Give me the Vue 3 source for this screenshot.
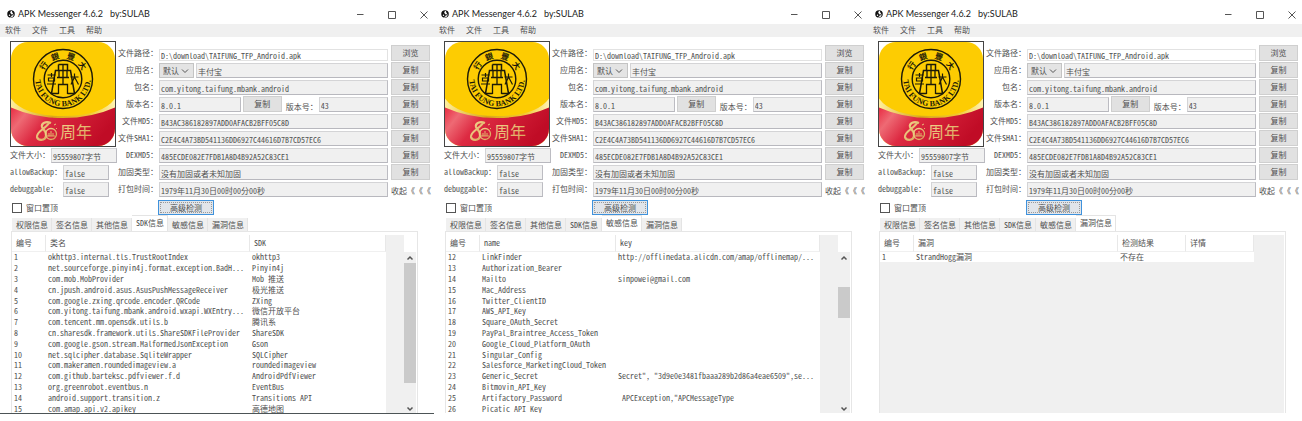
<script setup>
import { ref } from 'vue'

const menus = ['软件', '文件', '工具', '帮助']
const tabs = ['权限信息', '签名信息', '其他信息', 'SDK信息', '敏感信息', '漏洞信息']

const fields = [
  { id: 'md5', label: '文件MD5：', value: 'B43AC386182897ADD0AFACB2BFF05C8D' },
  { id: 'sha', label: '文件SHA1：', value: 'C2E4C4A73BD541136DD6927C44616D7B7CD57EC6' },
  { id: 'dex', label: 'DEXMD5：', value: '485ECDE082E7FDB1A8D4B92A52C83CE1' },
  { id: 'pack', label: '加固类型：', value: '没有加固或者未知加固' }
]

const windows = ref([
  {
    id: 'sdk',
    active: 3,
    cols: ['编号', '类名', 'SDK'],
    scroll: true,
    rows: [
      ['1', 'okhttp3.internal.tls.TrustRootIndex', 'okhttp3'],
      ['2', 'net.sourceforge.pinyin4j.format.exception.BadH...', 'Pinyin4j'],
      ['3', 'com.mob.MobProvider', 'Mob 推送'],
      ['4', 'cn.jpush.android.asus.AsusPushMessageReceiver', '极光推送'],
      ['5', 'com.google.zxing.qrcode.encoder.QRCode', 'ZXing'],
      ['6', 'com.yitong.taifung.mbank.android.wxapi.WXEntry...', '微信开放平台'],
      ['7', 'com.tencent.mm.opensdk.utils.b', '腾讯系'],
      ['8', 'cn.sharesdk.framework.utils.ShareSDKFileProvider', 'ShareSDK'],
      ['9', 'com.google.gson.stream.MalformedJsonException', 'Gson'],
      ['10', 'net.sqlcipher.database.SqliteWrapper', 'SQLCipher'],
      ['11', 'com.makeramen.roundedimageview.a', 'roundedimageview'],
      ['12', 'com.github.barteksc.pdfviewer.f.d', 'AndroidPdfViewer'],
      ['13', 'org.greenrobot.eventbus.n', 'EventBus'],
      ['14', 'android.support.transition.z', 'Transitions API'],
      ['15', 'com.amap.api.v2.apikey', '高德地图']
    ]
  },
  {
    id: 'leak',
    active: 4,
    cols: ['编号', 'name', 'key'],
    scroll: true,
    rows: [
      ['12', 'LinkFinder', 'http://offlinedata.alicdn.com/amap/offlinemap/...'],
      ['13', 'Authorization_Bearer', ''],
      ['14', 'Mailto', 'sinpowei@gmail.com'],
      ['15', 'Mac_Address', ''],
      ['16', 'Twitter_ClientID', ''],
      ['17', 'AWS_API_Key', ''],
      ['18', 'Square_OAuth_Secret', ''],
      ['19', 'PayPal_Braintree_Access_Token', ''],
      ['20', 'Google_Cloud_Platform_OAuth', ''],
      ['21', 'Singular_Config', ''],
      ['22', 'Salesforce_MarketingCloud_Token', ''],
      ['23', 'Generic_Secret', 'Secret", "3d9e0e3481fbaaa289b2d86a4eae6509",se...'],
      ['24', 'Bitmovin_API_Key', ''],
      ['25', 'Artifactory_Password', ' APCException,"APCMessageType'],
      ['26', 'Picatic API Key', '']
    ]
  },
  {
    id: 'vuln',
    active: 5,
    cols: ['编号', '漏洞', '检测结果', '详情'],
    scroll: false,
    rows: [['1', 'StrandHogg漏洞', '不存在', '']]
  }
])
</script>

<template>
  <main class="desk">
    <section v-for="w in windows" :key="w.id" class="window" :class="w.id">
      <header class="titlebar">
        <svg class="logo" viewBox="0 0 16 16" aria-hidden="true">
          <circle cx="8" cy="8" r="7.5" fill="#111" />
          <path d="M10.500 1.500C6 2.500 5.500 5.500 8 7.500s2.500 6-3 6.800a7.200 7.200 0 0 0 2.500.5c5-1 6.500-4 5-7S9 4 10.500 1.500z" fill="#fff" />
          <circle cx="5" cy="10.500" r="1.500" fill="#fff" />
          <circle cx="10.300" cy="9.500" r="1.400" fill="#111" />
        </svg>
        <h1>APK Messenger 4.6.2</h1>
        <span class="by">by:SULAB</span>
        <div class="controls">
          <button type="button" aria-label="最小化"><svg viewBox="0 0 12 12"><path d="M3 6.500h6.500" /></svg></button>
          <button type="button" aria-label="最大化"><svg viewBox="0 0 12 12"><path d="M2.500 3.500h7v7h-7z" /></svg></button>
          <button type="button" aria-label="关闭"><svg viewBox="0 0 12 12"><path d="M2.500 3.500l7 7M9.500 3.500l-7 7" /></svg></button>
        </div>
      </header>

      <nav class="menubar">
        <button v-for="m in menus" :key="m" type="button">{{ m }}</button>
      </nav>

      <div class="info">
        <div class="left">
          <svg class="appicon" viewBox="0 0 106 106" role="img" aria-label="大豐銀行">
            <defs>
              <linearGradient :id="w.id + 'red'" x1="0" y1="0" x2="1" y2="0.300">
                <stop offset="0" stop-color="#e8283f" />
                <stop offset="0.180" stop-color="#ee6a74" />
                <stop offset="0.400" stop-color="#dd2a42" />
                <stop offset="1" stop-color="#c00c26" />
              </linearGradient>
              <linearGradient :id="w.id + 'rim'" x1="0" y1="0" x2="1" y2="0">
                <stop offset="0" stop-color="#fff0a0" />
                <stop offset="0.400" stop-color="#d8a818" />
                <stop offset="0.750" stop-color="#f0c830" />
                <stop offset="1" stop-color="#fff4b8" />
              </linearGradient>
              <linearGradient :id="w.id + 'gold'" x1="0" y1="0" x2="1" y2="1">
                <stop offset="0" stop-color="#f4d890" />
                <stop offset="1" stop-color="#d8a058" />
              </linearGradient>
              <clipPath :id="w.id + 'clip'"><rect x="1" y="1" width="104" height="104" rx="17" /></clipPath>
            </defs>
            <rect width="106" height="106" fill="#fff" />
            <g :clip-path="`url(#${w.id}clip)`">
              <rect width="106" height="106" fill="#fdcc02" />
              <path d="M0 56Q12 75 53 75T106 56V106H0z" :fill="`url(#${w.id}rim)`" />
              <path d="M0 66Q24 77 53 77T106 66V106H0z" :fill="`url(#${w.id}red)`" />
            </g>
            <rect x="0.500" y="0.500" width="105" height="105" fill="none" stroke="#444" />
            <g fill="none" stroke="#1c1a08">
              <circle cx="53" cy="38" r="29.500" stroke-width="1.400" />
              <circle cx="53" cy="38" r="18.800" stroke-width="1.400" />
              <path d="M48.500 23.500h9v6h3l4 23M48.500 23.500v6h-3l-4 23M45.500 29.500h15" stroke-width="1.500" />
              <path d="M49 29.500v7h8v-7M53 24v20M47 36.500h12M48.500 53V43.500h9V53" stroke-width="1.300" />
              <path d="M37.500 34h8M41.500 32v4M38.500 37h6v3h-6zM37 43h9" stroke-width="1.200" />
              <path d="M60.500 36h8M64.500 32.500v3.500l-3.500 7.500M64.500 36l4 7.500" stroke-width="1.200" />
              <path d="M40.500 52.500h8M57.500 52.500h8" stroke-width="1.500" />
            </g>
            <path :id="w.id + 'ring'" d="M25.800 33A27.600 27.600 0 1 0 80.200 33" fill="none" />
            <text class="bank"><textPath :href="`#${w.id}ring`" startOffset="50%" text-anchor="middle">TAI FUNG BANK LTD.</textPath></text>
            <g class="seal">
              <text x="0" y="3" transform="translate(33.500 24.500) rotate(-55)">行</text>
              <text x="0" y="3" transform="translate(45 15.500) rotate(-19)">銀</text>
              <text x="0" y="3" transform="translate(61 15.500) rotate(19)">豐</text>
              <text x="0" y="3" transform="translate(72.500 24.500) rotate(55)">大</text>
            </g>
            <g fill="none" :stroke="`url(#${w.id}gold)`">
              <path d="M41 82c-5-2-10 0-9 4 1 3 5 4 4 9-1 5-8 5-9 1-1-5 8-8 12-14" stroke-width="2.200" />
              <circle cx="41" cy="93" r="5.500" stroke-width="1.300" />
              <path d="M37 95h8M39 92v3M41 90v5M43 92v3M44 84l2-1M46 87l1 1" stroke-width="1" />
            </g>
            <text class="anniv" x="50" y="97" :fill="`url(#${w.id}gold)`">周年</text>
          </svg>
          <div class="row size"><label :for="w.id + 'size'">文件大小：</label><input :id="w.id + 'size'" value="95559807字节" readonly /></div>
          <div class="row flag"><label :for="w.id + 'bk'">allowBackup：</label><input :id="w.id + 'bk'" value="false" readonly /></div>
          <div class="row flag"><label :for="w.id + 'db'">debuggable：</label><input :id="w.id + 'db'" value="false" readonly /></div>
        </div>

        <div class="form">
          <div class="line">
            <label :for="w.id + 'path'">文件路径：</label>
            <input :id="w.id + 'path'" class="path" value="D:\download\TAIFUNG_TFP_Android.apk" readonly />
            <button type="button">浏览</button>
          </div>
          <div class="line">
            <label :for="w.id + 'name'">应用名：</label>
            <div class="group">
              <span class="pick">
                <select aria-label="语言"><option>默认</option></select>
                <svg viewBox="0 0 8 8" aria-hidden="true"><path d="M1 2.500l3 3 3-3" /></svg>
              </span>
              <input :id="w.id + 'name'" value="丰付宝" readonly />
            </div>
            <button type="button">复制</button>
          </div>
          <div class="line">
            <label :for="w.id + 'pkg'">包名：</label>
            <input :id="w.id + 'pkg'" value="com.yitong.taifung.mbank.android" readonly />
            <button type="button">复制</button>
          </div>
          <div class="line">
            <label :for="w.id + 'ver'">版本名：</label>
            <div class="group">
              <input :id="w.id + 'ver'" class="ver" value="8.0.1" readonly />
              <button type="button">复制</button>
              <label :for="w.id + 'code'">版本号：</label>
              <input :id="w.id + 'code'" class="code" value="43" readonly />
            </div>
            <button type="button">复制</button>
          </div>
          <div v-for="f in fields" :key="f.id" class="line">
            <label :for="w.id + f.id">{{ f.label }}</label>
            <input :id="w.id + f.id" :value="f.value" readonly />
            <button type="button">复制</button>
          </div>
          <div class="line">
            <label :for="w.id + 'time'">打包时间：</label>
            <input :id="w.id + 'time'" value="1979年11月30日00时00分00秒" readonly />
            <button type="button" class="fold">收起《《《</button>
          </div>
        </div>
      </div>

      <div class="actions">
        <label class="pin"><input type="checkbox" />窗口置顶</label>
        <button type="button" class="scan">高级检测</button>
      </div>

      <div class="tabs" role="tablist">
        <button
          v-for="(t, i) in tabs" :key="t" type="button" role="tab"
          :aria-selected="w.active === i" :class="{ on: w.active === i }"
        >{{ t }}</button>
      </div>

      <div class="panel">
        <div class="list">
          <table>
            <thead>
              <tr><th v-for="c in w.cols" :key="c">{{ c }}</th></tr>
            </thead>
            <tbody>
              <tr v-for="r in w.rows" :key="r[0]"><td v-for="(c, i) in r" :key="i">{{ c }}</td></tr>
            </tbody>
          </table>
        </div>
        <div v-if="w.scroll" class="scrollbar">
          <button type="button" aria-label="向上滚动"><svg viewBox="0 0 8 8"><path d="M1.500 5.500L4 3l2.500 2.500" /></svg></button>
          <div class="track"><div class="thumb"></div></div>
          <button type="button" aria-label="向下滚动"><svg viewBox="0 0 8 8"><path d="M1.500 3.500L4 6l2.500-2.500" /></svg></button>
        </div>
      </div>
    </section>
  </main>
</template>

<style>
body {
  background: #fff;
}
</style>

<style scoped>
.desk {
  display: grid;
  grid-template-columns: repeat(3, 1fr);
  align-items: start;
  padding-bottom: 7px;
  color: #505050;
  font: 8px/10px "Noto Sans CJK SC", sans-serif;
  font-feature-settings: "hwid";
  font-variant-ligatures: none;
}
.desk * {
  box-sizing: border-box;
}
button, input, select {
  margin: 0;
  padding: 0;
  border: 0;
  border-radius: 0;
  background: none;
  color: inherit;
  font: inherit;
  font-feature-settings: inherit;
  font-variant-ligatures: none;
  white-space: nowrap;
}
label {
  white-space: nowrap;
}
.window {
  min-width: 0;
  overflow: hidden;
  border-bottom: 1px solid transparent;
}
.window.sdk {
  border-bottom-color: #4c5456;
}

.titlebar {
  display: flex;
  align-items: center;
  height: 24px;
  padding: 4px 4px 0 7px;
  color: #222;
  font: 9px/12px Lato, sans-serif;
  font-feature-settings: normal;
}
.logo {
  width: 8px;
  height: 8px;
  margin-right: 3px;
}
h1 {
  margin: 0;
  font: inherit;
}
.by {
  margin-left: 7px;
}
.controls {
  display: flex;
  gap: 20px;
  margin-left: auto;
}
.controls button {
  width: 12px;
  height: 12px;
}
svg {
  display: block;
}
.controls path {
  fill: none;
  stroke: #555;
}

.menubar {
  display: flex;
  gap: 11px;
  height: 13px;
  padding: 0 0 2px 5px;
  background: #f0f0f0;
}

.info {
  display: flex;
  padding: 4px 4px 0 10px;
}
.left {
  display: grid;
  grid-template-columns: minmax(0, 1fr);
  grid-template-rows: 105px 16px 16px 16px;
  row-gap: 1px;
  flex: none;
  width: 107px;
}
.appicon {
  width: 106px;
  height: 106px;
}
.row {
  display: flex;
  align-items: center;
}
.row label {
  flex: none;
  width: 53px;
}
.row.size label {
  width: 41px;
}
.row input {
  flex: 1;
  min-width: 0;
}
.row.flag input {
  flex: none;
  width: 46px;
}
.form {
  display: grid;
  grid-auto-rows: 16px;
  row-gap: 1px;
  flex: 1;
  min-width: 0;
  padding-top: 4px;
}
.line {
  display: grid;
  grid-template-columns: 41px minmax(0, 1fr) 39px;
  column-gap: 1px;
  align-items: end;
}
.line > label {
  align-self: center;
  text-align: right;
}
.info input {
  height: 15px;
  padding: 2px 1px 0;
  border: 1px solid #d4d4d6;
  border-right-color: #bcbcc2;
  border-bottom-color: #b8b8be;
  background: #f0f0f0;
}
.line > input, .group {
  width: calc(100% - 2px);
}
.info input.path {
  height: 12px;
  padding-top: 1px;
  border-color: #e2e2e2;
  background: #fff;
}
.line button {
  height: 16px;
  border: 1px solid #cfcfcf;
  background: #e1e1e1;
}
.line .fold {
  padding-top: 4px;
  border: 0;
  background: none;
}
.group {
  display: flex;
  align-items: end;
  gap: 2px;
}
.group input {
  flex: 1;
  min-width: 0;
}
.group .ver {
  flex: 82 1 0;
}
.group .code {
  flex: 69 1 0;
}
.group button {
  width: 39px;
}
.group label {
  width: 33px;
  padding-left: 2px;
}
.pick {
  display: flex;
  align-items: center;
  width: 35px;
  height: 15px;
  padding: 0 4px 0 3px;
  border: 1px solid #c4c4c4;
  background: #e4e4e4;
}
.pick select {
  appearance: none;
  width: 18px;
}
.pick svg {
  width: 8px;
  height: 8px;
}
.pick path, .scrollbar path {
  fill: none;
  stroke: #555;
}

.bank {
  fill: #1c1a08;
  font: bold 8px "Liberation Serif", serif;
}
.seal {
  fill: #1c1a08;
  font: bold 8px "Noto Sans CJK TC", sans-serif;
  text-anchor: middle;
}
.anniv {
  font: 16px "Noto Sans CJK SC", sans-serif;
}

.actions {
  display: grid;
  grid-template-columns: 146px 56px;
  height: 18px;
  padding: 3px 0 0 12px;
}
.pin {
  display: flex;
  align-items: center;
  gap: 4px;
  height: 15px;
}
.pin input {
  appearance: none;
  width: 10px;
  height: 10px;
  border: 1px solid #555;
  background: #fff;
}
.scan {
  height: 15px;
  border: 1px solid #3f92dc;
  background: #e1e5ea;
  outline: 1px dotted #999;
  outline-offset: -3px;
}

.tabs {
  display: flex;
  align-items: end;
  height: 16px;
  padding-left: 12px;
}
.tabs button {
  height: 13px;
  padding: 0 3px 0 4px;
  border-right: 1px solid #e4e4e4;
  background: #f0f0f0;
}
.tabs .on {
  height: 16px;
  padding-bottom: 2px;
  border-top: 1px solid #e4e4e4;
  background: #fff;
}
.panel {
  display: flex;
  height: 182px;
  margin: 0 16px 0 11px;
  padding: 3px 1px 0 0;
  overflow: hidden;
  border: 1px solid #e6e6e6;
  border-bottom: 0;
}
.list {
  flex: 1;
  min-width: 0;
  padding-right: 18px;
  background: #f0f0f0;
}
.vuln .list {
  padding-right: 30px;
}
table {
  width: 100%;
  table-layout: fixed;
  border-collapse: separate;
  border-spacing: 0;
}
.sdk table, .leak table {
  height: 179px;
}
tr {
  background: #fff;
}
th, td {
  padding: 0;
  overflow: hidden;
  font-weight: normal;
  text-align: left;
  white-space: pre;
}
th {
  height: 17px;
  padding-left: 4px;
  border-right: 1px solid #e8e8e8;
  border-bottom: 1px solid #f0f0f0;
}
td {
  height: 10px;
  padding-left: 2px;
  line-height: 10px;
}
th:first-child {
  width: 34px;
}
.sdk th:nth-child(2), .vuln th:nth-child(2) {
  width: 204px;
}
.leak th:nth-child(2) {
  width: 136px;
}
.scrollbar {
  display: flex;
  flex-direction: column;
  flex: none;
  width: 12px;
  margin-top: 17px;
  background: #f0f0f0;
}
.scrollbar button {
  display: grid;
  flex: none;
  place-items: center;
  height: 11px;
}
.scrollbar svg {
  width: 8px;
  height: 8px;
}
.scrollbar path {
  stroke-width: 1.5;
}
.track {
  flex: 1;
}
.thumb {
  height: 120px;
  background: #cacaca;
}
.leak .thumb {
  height: 31px;
  margin-top: 24px;
}
</style>
